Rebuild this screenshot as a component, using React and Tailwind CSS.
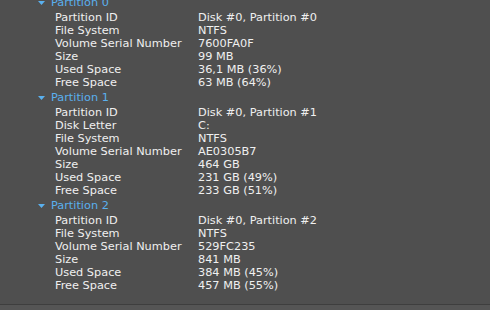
const partitions = [
  {
    name: 'Partition 0',
    rows: [
      ['Partition ID', 'Disk #0, Partition #0'],
      ['File System', 'NTFS'],
      ['Volume Serial Number', '7600FA0F'],
      ['Size', '99 MB'],
      ['Used Space', '36,1 MB (36%)'],
      ['Free Space', '63 MB (64%)'],
    ],
  },
  {
    name: 'Partition 1',
    rows: [
      ['Partition ID', 'Disk #0, Partition #1'],
      ['Disk Letter', 'C:'],
      ['File System', 'NTFS'],
      ['Volume Serial Number', 'AE0305B7'],
      ['Size', '464 GB'],
      ['Used Space', '231 GB (49%)'],
      ['Free Space', '233 GB (51%)'],
    ],
  },
  {
    name: 'Partition 2',
    rows: [
      ['Partition ID', 'Disk #0, Partition #2'],
      ['File System', 'NTFS'],
      ['Volume Serial Number', '529FC235'],
      ['Size', '841 MB'],
      ['Used Space', '384 MB (45%)'],
      ['Free Space', '457 MB (55%)'],
    ],
  },
]

function Arrow() {
  return (
    <svg width="7" height="4" viewBox="0 0 7 4" className="mr-[6px] shrink-0" aria-hidden="true">
      <path d="M0 0h7L3.5 4z" fill="#5ab0ee" />
    </svg>
  )
}

function Section({ name, rows }) {
  return (
    <div>
      <div className="flex items-center h-[17px] pl-[38px] text-[#5ab0ee]">
        <Arrow />
        <span>{name}</span>
      </div>
      {rows.map(([label, value]) => (
        <div key={label} className="flex h-[13px] items-center">
          <span className="w-[198px] pl-[55px] shrink-0 overflow-hidden whitespace-nowrap">{label}</span>
          <span className="whitespace-nowrap">{value}</span>
        </div>
      ))}
    </div>
  )
}

export default function App() {
  return (
    <div
      className="w-[490px] h-[310px] bg-[#4f4f4f] text-[#f0f0f0] text-[11.3px] leading-[13px] flex flex-col overflow-hidden"
      style={{ fontFamily: '"DejaVu Sans", Verdana, sans-serif' }}
    >
      <div className="flex-1 overflow-hidden -mt-[6px]">
        {partitions.map((p) => (
          <Section key={p.name} name={p.name} rows={p.rows} />
        ))}
      </div>
      <div className="h-[6px] border-t border-[#3e3e3e] bg-[#555555] shrink-0" />
    </div>
  )
}
